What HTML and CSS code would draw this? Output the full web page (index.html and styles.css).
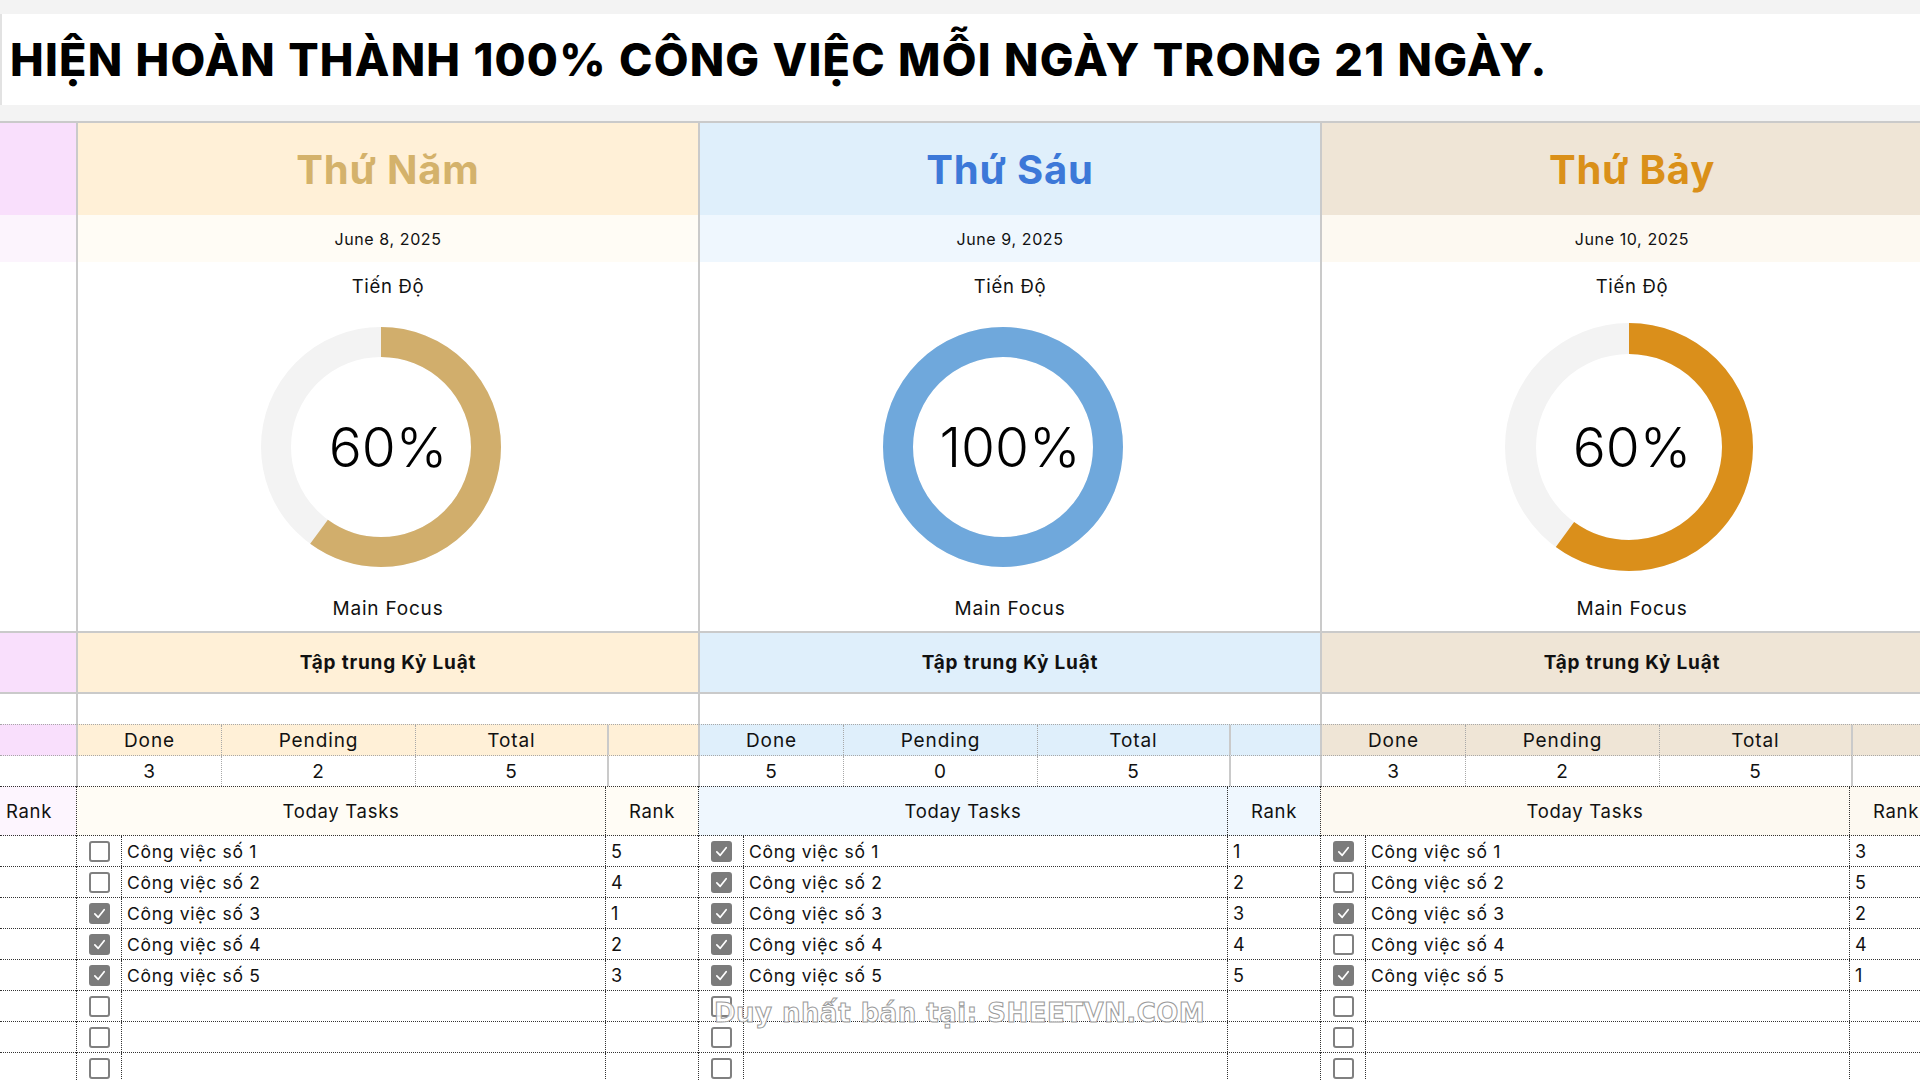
FILE: index.html
```html
<!DOCTYPE html>
<html lang="vi">
<head>
<meta charset="utf-8">
<title>Theo dõi công việc</title>
<link rel="stylesheet" href="styles.css">
</head>
<body>
<div class="top-strip"></div>
<header class="title-row"><h1>HIỆN HOÀN THÀNH 100% CÔNG VIỆC MỖI NGÀY TRONG 21 NGÀY.</h1></header>
<div class="gap-row"></div>

<main class="sheet">
  <div class="side">
    <div class="r-head"></div>
    <div class="r-date"></div>
    <div class="r-chart"></div>
    <div class="r-focus"></div>
    <div class="r-empty"></div>
    <div class="r-stathead"></div>
    <div class="r-statval"></div>
    <div class="r-taskhead"><span class="side-rank">Rank</span></div>
    <div class="r-task"></div><div class="r-task"></div><div class="r-task"></div><div class="r-task"></div>
    <div class="r-task"></div><div class="r-task"></div><div class="r-task"></div><div class="r-task"></div>
  </div>

  <section class="day day-1">
    <div class="r-head"><h2>Thứ Năm</h2></div>
    <div class="r-date">June 8, 2025</div>
    <div class="r-chart">
      <div class="label">Tiến Độ</div>
      <div class="donut">
        <svg viewBox="0 0 240 240"><circle class="track" cx="120" cy="120" r="105"/><circle class="prog" cx="120" cy="120" r="105" stroke-dasharray="395.8 659.7" transform="rotate(-90 120 120)"/></svg>
        <span class="pct">60%</span>
      </div>
      <div class="label focus-label">Main Focus</div>
    </div>
    <div class="r-focus">Tập trung Kỷ Luật</div>
    <div class="r-empty"></div>
    <div class="r-stathead stats"><span>Done</span><span>Pending</span><span>Total</span><span class="blank"></span></div>
    <div class="r-statval stats"><span>3</span><span>2</span><span>5</span><span class="blank"></span></div>
    <div class="r-taskhead"><span>Today Tasks</span><span>Rank</span></div>
    <div class="r-task"><span class="cb"><i class="box"></i></span><span class="name">Công việc số 1</span><span class="rank">5</span></div>
    <div class="r-task"><span class="cb"><i class="box"></i></span><span class="name">Công việc số 2</span><span class="rank">4</span></div>
    <div class="r-task"><span class="cb"><i class="box on"><svg viewBox="0 0 20 20"><polyline points="4.5,10.5 8.5,14.5 15.5,5.5"/></svg></i></span><span class="name">Công việc số 3</span><span class="rank">1</span></div>
    <div class="r-task"><span class="cb"><i class="box on"><svg viewBox="0 0 20 20"><polyline points="4.5,10.5 8.5,14.5 15.5,5.5"/></svg></i></span><span class="name">Công việc số 4</span><span class="rank">2</span></div>
    <div class="r-task"><span class="cb"><i class="box on"><svg viewBox="0 0 20 20"><polyline points="4.5,10.5 8.5,14.5 15.5,5.5"/></svg></i></span><span class="name">Công việc số 5</span><span class="rank">3</span></div>
    <div class="r-task"><span class="cb"><i class="box"></i></span><span class="name"></span><span class="rank"></span></div>
    <div class="r-task"><span class="cb"><i class="box"></i></span><span class="name"></span><span class="rank"></span></div>
    <div class="r-task"><span class="cb"><i class="box"></i></span><span class="name"></span><span class="rank"></span></div>
  </section>

  <section class="day day-2">
    <div class="r-head"><h2>Thứ Sáu</h2></div>
    <div class="r-date">June 9, 2025</div>
    <div class="r-chart">
      <div class="label">Tiến Độ</div>
      <div class="donut">
        <svg viewBox="0 0 240 240"><circle class="track" cx="120" cy="120" r="105"/><circle class="prog" cx="120" cy="120" r="105" stroke-dasharray="659.8 659.7" transform="rotate(-90 120 120)"/></svg>
        <span class="pct">100%</span>
      </div>
      <div class="label focus-label">Main Focus</div>
    </div>
    <div class="r-focus">Tập trung Kỷ Luật</div>
    <div class="r-empty"></div>
    <div class="r-stathead stats"><span>Done</span><span>Pending</span><span>Total</span><span class="blank"></span></div>
    <div class="r-statval stats"><span>5</span><span>0</span><span>5</span><span class="blank"></span></div>
    <div class="r-taskhead"><span>Today Tasks</span><span>Rank</span></div>
    <div class="r-task"><span class="cb"><i class="box on"><svg viewBox="0 0 20 20"><polyline points="4.5,10.5 8.5,14.5 15.5,5.5"/></svg></i></span><span class="name">Công việc số 1</span><span class="rank">1</span></div>
    <div class="r-task"><span class="cb"><i class="box on"><svg viewBox="0 0 20 20"><polyline points="4.5,10.5 8.5,14.5 15.5,5.5"/></svg></i></span><span class="name">Công việc số 2</span><span class="rank">2</span></div>
    <div class="r-task"><span class="cb"><i class="box on"><svg viewBox="0 0 20 20"><polyline points="4.5,10.5 8.5,14.5 15.5,5.5"/></svg></i></span><span class="name">Công việc số 3</span><span class="rank">3</span></div>
    <div class="r-task"><span class="cb"><i class="box on"><svg viewBox="0 0 20 20"><polyline points="4.5,10.5 8.5,14.5 15.5,5.5"/></svg></i></span><span class="name">Công việc số 4</span><span class="rank">4</span></div>
    <div class="r-task"><span class="cb"><i class="box on"><svg viewBox="0 0 20 20"><polyline points="4.5,10.5 8.5,14.5 15.5,5.5"/></svg></i></span><span class="name">Công việc số 5</span><span class="rank">5</span></div>
    <div class="r-task"><span class="cb"><i class="box"></i></span><span class="name"></span><span class="rank"></span></div>
    <div class="r-task"><span class="cb"><i class="box"></i></span><span class="name"></span><span class="rank"></span></div>
    <div class="r-task"><span class="cb"><i class="box"></i></span><span class="name"></span><span class="rank"></span></div>
  </section>

  <section class="day day-3">
    <div class="r-head"><h2>Thứ Bảy</h2></div>
    <div class="r-date">June 10, 2025</div>
    <div class="r-chart">
      <div class="label">Tiến Độ</div>
      <div class="donut">
        <svg viewBox="0 0 240 240"><circle class="track" cx="120" cy="120" r="105"/><circle class="prog" cx="120" cy="120" r="105" stroke-dasharray="395.8 659.7" transform="rotate(-90 120 120)"/></svg>
        <span class="pct">60%</span>
      </div>
      <div class="label focus-label">Main Focus</div>
    </div>
    <div class="r-focus">Tập trung Kỷ Luật</div>
    <div class="r-empty"></div>
    <div class="r-stathead stats"><span>Done</span><span>Pending</span><span>Total</span><span class="blank"></span></div>
    <div class="r-statval stats"><span>3</span><span>2</span><span>5</span><span class="blank"></span></div>
    <div class="r-taskhead"><span>Today Tasks</span><span>Rank</span></div>
    <div class="r-task"><span class="cb"><i class="box on"><svg viewBox="0 0 20 20"><polyline points="4.5,10.5 8.5,14.5 15.5,5.5"/></svg></i></span><span class="name">Công việc số 1</span><span class="rank">3</span></div>
    <div class="r-task"><span class="cb"><i class="box"></i></span><span class="name">Công việc số 2</span><span class="rank">5</span></div>
    <div class="r-task"><span class="cb"><i class="box on"><svg viewBox="0 0 20 20"><polyline points="4.5,10.5 8.5,14.5 15.5,5.5"/></svg></i></span><span class="name">Công việc số 3</span><span class="rank">2</span></div>
    <div class="r-task"><span class="cb"><i class="box"></i></span><span class="name">Công việc số 4</span><span class="rank">4</span></div>
    <div class="r-task"><span class="cb"><i class="box on"><svg viewBox="0 0 20 20"><polyline points="4.5,10.5 8.5,14.5 15.5,5.5"/></svg></i></span><span class="name">Công việc số 5</span><span class="rank">1</span></div>
    <div class="r-task"><span class="cb"><i class="box"></i></span><span class="name"></span><span class="rank"></span></div>
    <div class="r-task"><span class="cb"><i class="box"></i></span><span class="name"></span><span class="rank"></span></div>
    <div class="r-task"><span class="cb"><i class="box"></i></span><span class="name"></span><span class="rank"></span></div>
  </section>
</main>

<div class="watermark">Duy nhất bán tại: SHEETVN.COM</div>
</body>
</html>
```
FILE: styles.css
```css
* { box-sizing: border-box; }
html, body { margin: 0; padding: 0; }
body {
  width: 1920px;
  height: 1080px;
  overflow: hidden;
  position: relative;
  background: #fff;
  color: #111;
  font-family: Inter, "Noto Sans", sans-serif;
  font-size: 16px;
  letter-spacing: 0.5px;
}

.top-strip { height: 14px; background: #f3f3f3; }
.title-row {
  height: 91px;
  display: flex;
  align-items: center;
  padding-left: 8px;
  border-left: 2px solid #e2e2e2;
}
.title-row h1 {
  margin: 0;
  font-size: 45px;
  font-weight: 800;
  letter-spacing: 1.25px;
  word-spacing: 1px;
  color: #000;
}
.gap-row { height: 18px; background: #f3f3f3; border-bottom: 2px solid #cacaca; }

.sheet { display: flex; width: 1942px; }
.side { width: 76px; flex: none; }
.day { width: 622px; flex: none; }

.r-head { height: 92px; }
.r-date { height: 47px; }
.r-chart { height: 369px; }
.r-focus { height: 63px; border-top: 2px solid #cacaca; border-bottom: 2px solid #cacaca; }
.r-empty { height: 30px; }
.r-stathead { height: 32px; border-top: 1px dotted #a8a8a8; border-bottom: 1px dotted #a8a8a8; }
.r-statval { height: 30px; }
.r-taskhead { height: 50px; border-top: 1px dotted #333; border-bottom: 1px dotted #333; }
.r-task { height: 31px; border-bottom: 1px dotted #333; }

/* side column */
.side .r-head, .side .r-focus, .side .r-stathead { background: #f9dffc; }
.side .r-date { background: #fcf4fd; }
.side .r-taskhead { background: #fdf5fe; display: flex; align-items: center; padding-left: 6px; font-size: 19px; letter-spacing: 0.8px; }

/* day columns */
.day .r-head, .day .r-date, .day .r-chart, .day .r-focus, .day .r-empty,
.day .r-stathead, .day .r-statval { border-left: 2px solid #cacaca; }
.day .r-taskhead, .day .r-task { border-left: 1px dotted #333; }

.r-head { display: flex; align-items: center; justify-content: center; }
.r-head h2 { margin: 0; font-size: 40px; font-weight: 700; letter-spacing: 0.8px; }
.r-date { display: flex; align-items: center; justify-content: center; font-size: 16px; letter-spacing: 0.6px; }

.r-chart { display: flex; flex-direction: column; align-items: center; padding-top: 14px; }
.label { height: 20px; line-height: 20px; font-size: 18.5px; letter-spacing: 0.7px; }
.donut { position: relative; width: 240px; height: 240px; margin-top: 31px; margin-right: 14px; }
.donut svg { display: block; width: 100%; height: 100%; }
.donut circle { fill: none; stroke-width: 30; }
.donut .track { stroke: #f3f3f3; }
.pct {
  position: absolute;
  inset: 0;
  padding-left: 14px;
  display: flex;
  align-items: center;
  justify-content: center;
  font-size: 55px;
  font-weight: 300;
  letter-spacing: 0;
  color: #000;
}
.focus-label { margin-top: 32px; font-size: 19px; letter-spacing: 0.8px; }

.day-3 .donut { width: 248px; height: 248px; margin-top: 27px; margin-right: 6px; }
.day-3 .pct { padding-left: 6px; }
.day-3 .focus-label { margin-top: 28px; }

.r-focus { display: flex; align-items: center; justify-content: center; font-weight: 700; font-size: 19px; letter-spacing: 0.8px; }

.stats { display: grid; grid-template-columns: 143px 194px 192px 1fr; }
.stats span { display: flex; align-items: center; justify-content: center; font-size: 19px; letter-spacing: 0.9px; }
.stats span + span { border-left: 1px dotted #a8a8a8; }
.stats span.blank { border-left: 2px solid #cacaca; }
.r-statval span { font-size: 19px; }

.day .r-taskhead { display: grid; grid-template-columns: 528px 1fr; }
.r-taskhead span { display: flex; align-items: center; justify-content: center; font-size: 18.5px; letter-spacing: 0.7px; }
.day .r-taskhead span + span { border-left: 1px dotted #333; }

.r-task { display: grid; grid-template-columns: 45px 483px 1fr; }
.r-task span { display: flex; align-items: center; font-size: 17.5px; letter-spacing: 0.7px; }
.r-task .cb { justify-content: center; border-right: 1px dotted #333; }
.r-task .name { padding-left: 5px; }
.r-task .rank { padding-left: 5px; border-left: 1px dotted #333; font-size: 18px; }

.box {
  display: block;
  width: 21px;
  height: 21px;
  border: 2px solid #808080;
  border-radius: 3px;
  background: #fff;
}
.box.on { background: #7b7b7b; border-color: #7b7b7b; }
.box svg { display: block; width: 17px; height: 17px; }
.box polyline { fill: none; stroke: #fff; stroke-width: 2; stroke-linecap: round; stroke-linejoin: round; }

/* day themes */
.day-1 .r-head, .day-1 .r-focus, .day-1 .r-stathead { background: #fff0d7; }
.day-1 .r-head h2 { color: #d4b26b; }
.day-1 .r-date, .day-1 .r-taskhead { background: #fffcf5; }
.day-1 .prog { stroke: #d1ae6c; }

.day-2 .r-head, .day-2 .r-focus, .day-2 .r-stathead { background: #dfeffb; }
.day-2 .r-head h2 { color: #3c78d8; }
.day-2 .r-date, .day-2 .r-taskhead { background: #eff7fe; }
.day-2 .prog { stroke: #6fa8dc; }

.day-3 .r-head, .day-3 .r-focus, .day-3 .r-stathead { background: #efe5d6; }
.day-3 .r-head h2 { color: #da9019; }
.day-3 .r-date, .day-3 .r-taskhead { background: #fdf9f1; }
.day-3 .prog { stroke: #da8f1b; }

.watermark {
  position: absolute;
  left: 714px;
  top: 998px;
  font-family: "DejaVu Sans", sans-serif;
  font-weight: 700;
  font-size: 26px;
  letter-spacing: 0.5px;
  color: rgba(255, 255, 255, 0.85);
  -webkit-text-stroke: 1px #9a9a9a;
  white-space: nowrap;
}
```
